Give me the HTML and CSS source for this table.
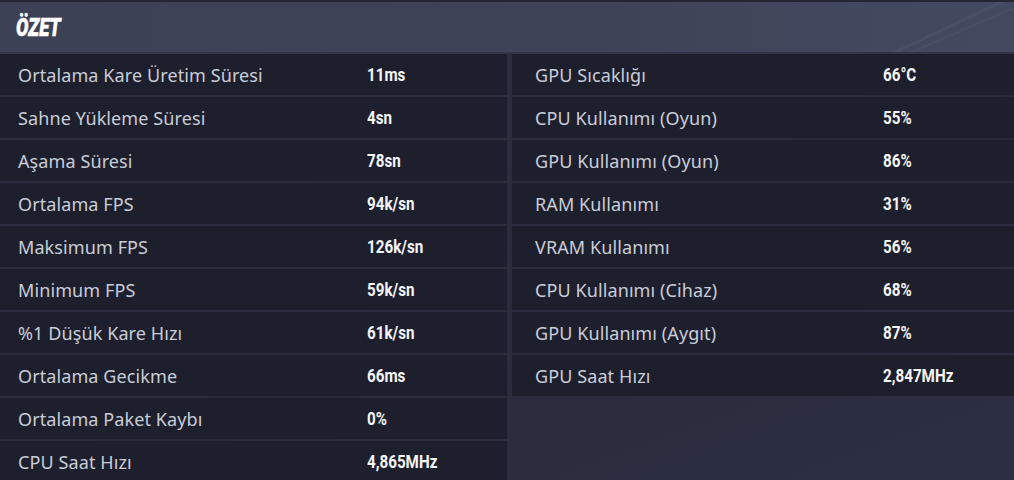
FILE: index.html
```html
<!DOCTYPE html>
<html lang="tr">
<head>
<meta charset="utf-8">
<link rel="stylesheet" href="styles.css">
</head>
<body>
<div class="page">
  <header class="header">
    <h1 class="title">ÖZET</h1>
    <svg class="deco" width="200" height="60" viewBox="0 0 200 60">
      <path d="M60 60 L200 -6" stroke="#5a6078" stroke-width="3" fill="none" opacity="0.3"/>
      <path d="M75 60 L200 6" stroke="#5a6078" stroke-width="2" fill="none" opacity="0.25"/>
    </svg>
  </header>
  <div class="grid">
    <div class="col left">
      <div class="row"><span class="label">Ortalama Kare Üretim Süresi</span><span class="value">11ms</span></div>
      <div class="row"><span class="label">Sahne Yükleme Süresi</span><span class="value">4sn</span></div>
      <div class="row"><span class="label">Aşama Süresi</span><span class="value">78sn</span></div>
      <div class="row"><span class="label">Ortalama FPS</span><span class="value">94k/sn</span></div>
      <div class="row"><span class="label">Maksimum FPS</span><span class="value">126k/sn</span></div>
      <div class="row"><span class="label">Minimum FPS</span><span class="value">59k/sn</span></div>
      <div class="row"><span class="label">%1 Düşük Kare Hızı</span><span class="value">61k/sn</span></div>
      <div class="row"><span class="label">Ortalama Gecikme</span><span class="value">66ms</span></div>
      <div class="row"><span class="label">Ortalama Paket Kaybı</span><span class="value">0%</span></div>
      <div class="row"><span class="label">CPU Saat Hızı</span><span class="value">4,865MHz</span></div>
    </div>
    <div class="col right">
      <div class="row"><span class="label">GPU Sıcaklığı</span><span class="value">66°C</span></div>
      <div class="row"><span class="label">CPU Kullanımı (Oyun)</span><span class="value">55%</span></div>
      <div class="row"><span class="label">GPU Kullanımı (Oyun)</span><span class="value">86%</span></div>
      <div class="row"><span class="label">RAM Kullanımı</span><span class="value">31%</span></div>
      <div class="row"><span class="label">VRAM Kullanımı</span><span class="value">56%</span></div>
      <div class="row"><span class="label">CPU Kullanımı (Cihaz)</span><span class="value">68%</span></div>
      <div class="row"><span class="label">GPU Kullanımı (Aygıt)</span><span class="value">87%</span></div>
      <div class="row"><span class="label">GPU Saat Hızı</span><span class="value">2,847MHz</span></div>
    </div>
  </div>
</div>
</body>
</html>
```

FILE: styles.css
```css
html, body {
  margin: 0;
  padding: 0;
}
body {
  background: #2a2c3e;
  width: 1014px;
  height: 480px;
  overflow: hidden;
  font-family: "Noto Sans", "DejaVu Sans", sans-serif;
}
.page {
  border-top: 2px solid #242636;
  background: linear-gradient(160deg, #2b2e40 0%, #2a2c3d 60%, #2c2f42 100%);
  height: 478px;
}
.header {
  position: relative;
  height: 50px;
  background: linear-gradient(90deg, #3d4155 0%, #3f4358 60%, #434a60 100%);
  display: flex;
  align-items: center;
  padding-left: 16px;
  border-bottom: 2px solid #323548;
  overflow: hidden;
}
.title {
  margin: 0;
  display: inline-block;
  font-family: Roboto, "DejaVu Sans", sans-serif;
  font-weight: 900;
  font-style: italic;
  font-size: 25px;
  line-height: 1;
  color: #ffffff;
  -webkit-text-stroke: 0.6px #ffffff;
  transform: scaleX(0.74);
  transform-origin: left center;
}
.deco {
  position: absolute;
  right: 0;
  top: 0;
}
.grid {
  display: flex;
  gap: 5px;
}
.col {
  display: flex;
  flex-direction: column;
  gap: 2px;
}
.left {
  width: 507px;
}
.right {
  width: 502px;
}
.row {
  height: 41px;
  background: #1e1f2d;
  display: flex;
  align-items: center;
}
.left .row {
  padding-left: 18px;
}
.right .row {
  padding-left: 23px;
}
.label {
  width: 349px;
  flex: none;
  color: #c9cdd7;
  font-size: 18px;
  letter-spacing: 0.1px;
}
.right .label {
  width: 348px;
}
.value {
  display: inline-block;
  color: #f4f5f8;
  font-family: Roboto, "DejaVu Sans", sans-serif;
  font-weight: 700;
  font-size: 19px;
  line-height: 1;
  transform: scaleX(0.8);
  transform-origin: left center;
}
```
